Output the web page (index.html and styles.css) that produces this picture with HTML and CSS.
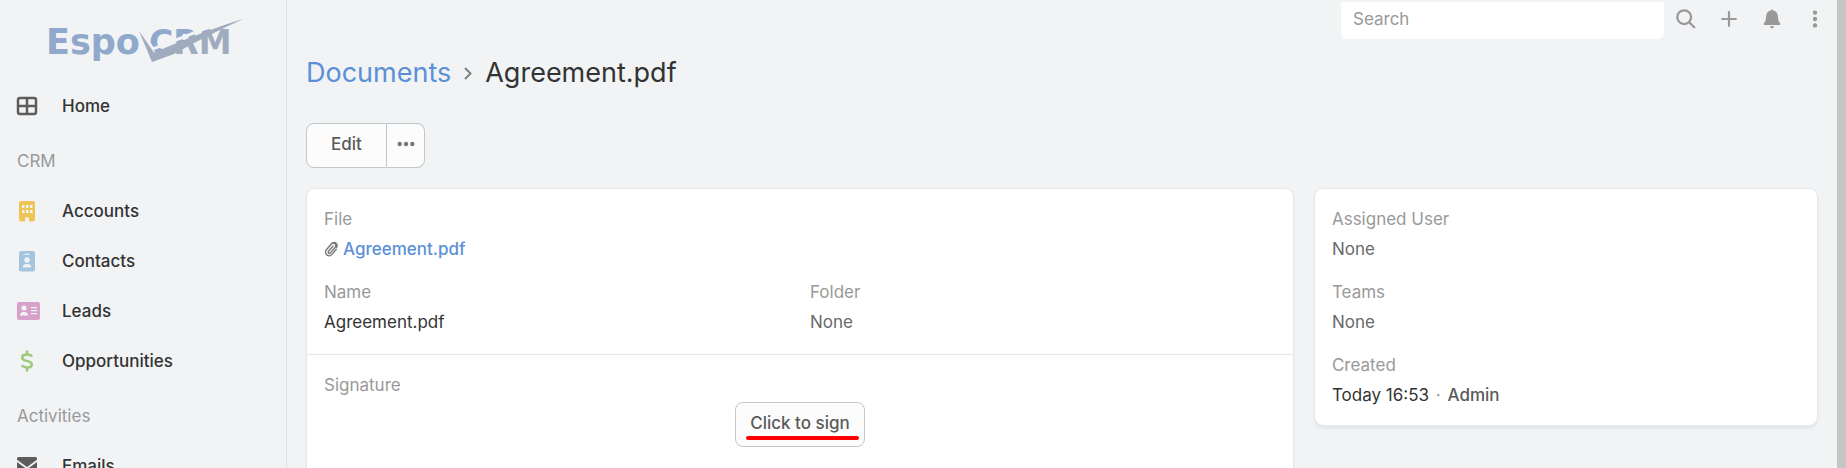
FILE: index.html
```html
<!DOCTYPE html>
<html lang="en">
<head>
<meta charset="utf-8">
<title>Agreement.pdf</title>
<link rel="stylesheet" href="styles.css">
</head>
<body>
<div class="app">
  <aside class="sidebar">
    <a class="logo" href="#" aria-label="EspoCRM">
      <svg width="200" height="54" viewBox="46 14 200 54">
        <defs>
          <linearGradient id="ink" gradientUnits="userSpaceOnUse" x1="184" y1="38" x2="191" y2="55">
            <stop offset="0.1" stop-color="#8fa8cb"/>
            <stop offset="0.1" stop-color="#a0abbe"/>
          </linearGradient>
        </defs>
        <text class="logo-text" x="46" y="54" fill="#8fa8cb">Espo</text>
        <text class="logo-text logo-crm" x="149" y="54" fill="url(#ink)">CRM</text>
        <path d="M140 29 153 49 204 29 243 17" fill="none" stroke="#f1f3f5" stroke-width="3"/>
        <path d="M139 31 154 52.500Q204 31 244 18.500Q206 36 174 54L152 62Z" fill="#a0abbe"/>
      </svg>
    </a>
    <nav class="nav">
      <a class="nav-item" href="#"><svg class="nav-icon" viewBox="0 0 24 24" fill="none" stroke="#5c5c5c" stroke-width="2.500"><rect x="2" y="4" width="18" height="16" rx="2"/><path d="M11 4v16M2 12h18"/></svg>Home</a>
      <div class="nav-group">CRM</div>
      <a class="nav-item" href="#"><svg class="nav-icon" viewBox="0 0 24 24"><path fill="#edc555" fill-rule="evenodd" d="M5 2h12q2 0 2 2v16.500q0 2-2 2h-4V20a2 2 0 0 0-4 0v2.500H5q-2 0-2-2V4q0-2 2-2ZM6 6v3h2.500V6ZM10 6v3h2.500V6ZM14 6v3h2.500V6ZM6 11v3h2.500v-3ZM10 11v3h2.500v-3ZM14 11v3h2.500v-3Z"/></svg>Accounts</a>
      <a class="nav-item" href="#"><svg class="nav-icon" viewBox="0 0 24 24"><rect x="3" y="2" width="16" height="20.500" rx="2" fill="#a4c5e0"/><path d="M8.500 5.300h5" stroke="#f1f3f5" stroke-width="1.200"/><circle cx="11" cy="11" r="2.700" fill="#f1f3f5"/><path fill="#f1f3f5" d="M6.700 18.500q.3-3.600 3.500-3.600h1.600q3.200 0 3.500 3.600Z"/></svg>Contacts</a>
      <a class="nav-item" href="#"><svg class="nav-icon" viewBox="0 0 24 24"><rect x="1" y="3" width="23" height="18" rx="2" fill="#d6a1cb"/><circle cx="8" cy="9" r="2.600" fill="#f1f3f5"/><path fill="#f1f3f5" d="M3.800 16.500q.4-3.500 3.400-3.500h1.600q3 0 3.400 3.500ZM15 8h6v1.200h-6ZM15 11h6v1.200h-6ZM15 14h6v1.200h-6Z"/></svg>Leads</a>
      <a class="nav-item" href="#"><svg class="nav-icon" viewBox="0 0 24 24" fill="none" stroke="#9dc97b" stroke-width="2.500" stroke-linecap="round" stroke-linejoin="round"><path d="M11 2.500v3M11 18.500v3M15.500 6.700Q13 5.500 10.500 5.500C5 5.500 4.800 10.500 9.500 11.600L12.500 12.400C17.500 13.800 16.500 18.500 11.500 18.500Q9 18.500 6.300 17"/></svg>Opportunities</a>
      <div class="nav-group">Activities</div>
      <a class="nav-item" href="#"><svg class="nav-icon" viewBox="0 0 24 24" fill="#5c5c5c"><path d="M2.500 3h17q1.500 0 1.500 1.500v1.300L11 13 1 5.800V4.500Q1 3 2.500 3ZM1 8l10 7.300L21 8v11q0 2-2 2H3q-2 0-2-2Z"/></svg>Emails</a>
    </nav>
  </aside>

  <main class="main">
    <header class="topbar">
      <input class="search" type="text" placeholder="Search" aria-label="Search">
      <button class="icon-button" aria-label="Search"><svg viewBox="0 0 24 24" fill="none" stroke="#999" stroke-width="2.500" stroke-linecap="round"><circle cx="10" cy="10" r="7.500"/><path d="m15.500 15.500 5.500 5.500"/></svg></button>
      <button class="icon-button" aria-label="Create"><svg viewBox="0 0 24 24" fill="none" stroke="#999" stroke-width="2.400" stroke-linecap="round"><path d="M12 4.500v15M4.500 12h15"/></svg></button>
      <button class="icon-button" aria-label="Notifications"><svg viewBox="0 0 24 24" fill="#999"><path d="M12 1.500a1.300 1.300 0 0 1 1.300 1.300Q18.500 4 18.500 10q0 4.500 2.300 6.500Q22 18.500 20 18.500H4Q2 18.500 3.200 16.500 5.500 14.500 5.500 10q0-6 5.200-7.200A1.300 1.300 0 0 1 12 1.500ZM9.500 20h5q-.5 2.300-2.500 2.300t-2.500-2.300Z"/></svg></button>
      <button class="icon-button" aria-label="Menu"><svg viewBox="0 0 24 24" fill="#999"><circle cx="12" cy="5" r="2.400"/><circle cx="12" cy="12" r="2.400"/><circle cx="12" cy="19" r="2.400"/></svg></button>
    </header>

    <h1 class="breadcrumb"><a href="#">Documents</a><svg class="chevron" width="10" height="16" viewBox="0 0 10 16" fill="none" stroke="#808080" stroke-width="2"><path d="m2 3 5.500 5.500L2 14"/></svg><span>Agreement.pdf</span></h1>

    <div class="actions">
      <button class="button edit">Edit</button><button class="button more" aria-label="More actions"><svg width="18" height="6" viewBox="0 0 18 6" fill="#777"><circle cx="2.700" cy="3" r="2.200"/><circle cx="9" cy="3" r="2.200"/><circle cx="15.300" cy="3" r="2.200"/></svg></button>
    </div>

    <div class="record">
      <section class="card">
        <div class="panel fields">
          <div class="field wide"><div class="label">File</div><div class="value file"><svg width="14" height="16" viewBox="0 0 14 16" fill="none" stroke="#777" stroke-width="1.400" stroke-linecap="round"><path d="m9 5-4.500 5.300a1.200 1.200 0 0 0 2 1.600l4.700-5.600a2.500 2.500 0 0 0-4-3.300L2.400 8.700a3.600 3.600 0 0 0 5.600 4.700L12.300 8.300M7.200 3a3.100 3.100 0 0 1 5.400 3.300"/></svg><a href="#">Agreement.pdf</a></div></div>
          <div class="field"><div class="label">Name</div><div class="value">Agreement.pdf</div></div>
          <div class="field"><div class="label">Folder</div><div class="value none">None</div></div>
        </div>
        <div class="panel signature">
          <div class="label">Signature</div>
          <button class="button sign">Click to sign</button>
        </div>
      </section>
      <section class="card side">
        <div class="field"><div class="label">Assigned User</div><div class="value none">None</div></div>
        <div class="field"><div class="label">Teams</div><div class="value none">None</div></div>
        <div class="field"><div class="label">Created</div><div class="value">Today 16:53 <span class="dot">·</span> <a class="user" href="#">Admin</a></div></div>
      </section>
    </div>
  </main>
  <div class="scrollbar"></div>
</div>
</body>
</html>
```
FILE: styles.css
```css
* {
  box-sizing: border-box;
}

body {
  margin: 0;
  background: #f1f3f5;
  color: #333;
  font: 400 17px/30px Inter, "Liberation Sans", sans-serif;
}

a {
  color: #5b90d6;
  text-decoration: none;
}

button,
input {
  font: inherit;
}

.app {
  display: flex;
  height: 100vh;
  overflow: hidden;
}

.sidebar {
  flex: 0 0 287px;
  border-right: 1px solid #dee0e3;
}

.logo {
  display: block;
  height: 81px;
  padding: 14px 0 0 46px;
}

.logo svg {
  display: block;
}

.logo-text {
  font: bold 35px "DejaVu Sans", sans-serif;
}

.logo-crm {
  font-size: 33px;
}

.nav-item {
  display: flex;
  align-items: center;
  gap: 22px;
  height: 50px;
  padding-left: 16px;
  color: #333;
  font-weight: 500;
}

.nav-icon {
  width: 24px;
  height: 24px;
}

.nav-group {
  height: 55px;
  padding: 15px 0 0 17px;
  color: #999;
}

.main {
  flex: 1;
  min-width: 0;
  padding: 0 19px;
}

.topbar {
  display: flex;
  justify-content: flex-end;
  height: 39px;
  padding-top: 2px;
}

.search {
  width: 323px;
  height: 37px;
  padding: 0 12px 4px;
  border: 0;
  border-radius: 0 0 6px 6px;
  background: #fff;
}

.search::placeholder {
  color: #999;
  opacity: 1;
}

.icon-button {
  display: flex;
  align-items: center;
  justify-content: center;
  width: 43px;
  height: 34px;
  padding: 0;
  border: 0;
  background: none;
}

.icon-button svg {
  width: 22px;
  height: 22px;
}

.icon-button:last-child {
  margin-right: -18px;
}

.breadcrumb {
  display: flex;
  align-items: center;
  gap: 12px;
  height: 40px;
  margin: 14px 0 30px;
  font-size: 27px;
  font-weight: 400;
}

.actions {
  display: flex;
  margin-bottom: 20px;
}

.button {
  height: 45px;
  padding: 0 0 4px;
  border: 1px solid #c0c8cb;
  border-radius: 8px;
  background: #fcfcfc;
  color: #5a5a5a;
  font-weight: 500;
}

.edit {
  width: 81px;
  border-radius: 8px 0 0 8px;
}

.more {
  display: flex;
  align-items: center;
  justify-content: center;
  width: 38px;
  border-left: 0;
  border-radius: 0 8px 8px 0;
}

.record {
  display: grid;
  grid-template-columns: 1.96fr 1fr;
  gap: 20px;
  align-items: start;
}

.card {
  border: 1px solid #e6e8eb;
  border-radius: 9px;
  background: #fff;
  box-shadow: 0 3px 3px rgba(0, 0, 0, 0.05);
}

.panel {
  padding: 15px 17px;
}

.fields {
  display: grid;
  grid-template-columns: 1fr 1fr;
  gap: 13px 20px;
  padding-bottom: 17px;
  border-bottom: 1px solid #e6e6e6;
}

.wide {
  grid-column: 1 / -1;
}

.label {
  color: #999;
}

.none {
  color: #6a6a6a;
}

.file {
  display: flex;
  align-items: center;
  gap: 5px;
  font-weight: 500;
}

.signature {
  min-height: 160px;
}

.sign {
  display: block;
  position: relative;
  width: 130px;
  margin: 2px auto 0;
}

.sign::after {
  content: "";
  position: absolute;
  right: 5px;
  bottom: 6px;
  left: 10px;
  height: 4px;
  border-radius: 2px;
  background: #f00;
}

.side {
  display: grid;
  gap: 13px;
  padding: 15px 17px;
}

.dot {
  margin: 0 2px;
  color: #999;
}

.user {
  color: #5a5a5a;
  font-weight: 500;
}

.scrollbar {
  flex: 0 0 9px;
  background: #c6c6c6;
}
```
